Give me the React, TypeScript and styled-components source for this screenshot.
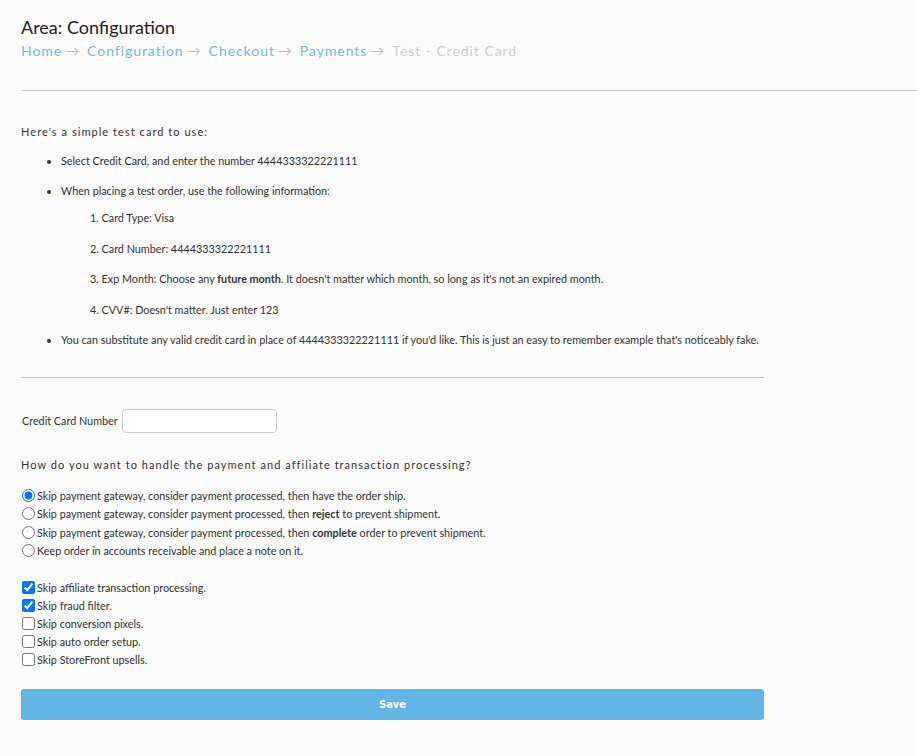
import styled, { createGlobalStyle } from "styled-components";

const GlobalStyle = createGlobalStyle`
    html, body {
        margin: 0;
        padding: 0;
        background: #fbfbfb;
    }

    body {
        font-family: Lato, "Open Sans", Arial, sans-serif;
        color: #333333;
    }
`;

const crumbs = ["Home", "Configuration", "Checkout", "Payments"];

const paymentOptions = [
    { label: <>Skip payment gateway, consider payment processed, then have the order ship.</>, checked: true },
    { label: <>Skip payment gateway, consider payment processed, then <b>reject</b> to prevent shipment.</>, checked: false },
    { label: <>Skip payment gateway, consider payment processed, then <b>complete</b> order to prevent shipment.</>, checked: false },
    { label: <>Keep order in accounts receivable and place a note on it.</>, checked: false },
];

const skipOptions = [
    { label: "Skip affiliate transaction processing.", checked: true },
    { label: "Skip fraud filter.", checked: true },
    { label: "Skip conversion pixels.", checked: false },
    { label: "Skip auto order setup.", checked: false },
    { label: "Skip StoreFront upsells.", checked: false },
];

export default function App() {
    return (
        <Page>
            <GlobalStyle />
            <Title>Area: Configuration</Title>
            <Breadcrumb>
                {crumbs.map((c) => (
                    <span key={c}>
                        <CrumbLink>{c}</CrumbLink>
                        <Arrow>→</Arrow>
                    </span>
                ))}
                <Current>Test - Credit Card</Current>
            </Breadcrumb>

            <TopRule />

            <Content>
                <Lead>Here's a simple test card to use:</Lead>
                <Bullets>
                    <li>Select Credit Card, and enter the number 4444333322221111</li>
                    <li>
                        When placing a test order, use the following information:
                        <Steps>
                            <li>1. Card Type: Visa</li>
                            <li>2. Card Number: 4444333322221111</li>
                            <li>
                                3. Exp Month: Choose any <b>future month</b>. It doesn't matter which month, so long as it's not an expired month.
                            </li>
                            <li>4. CVV#: Doesn't matter. Just enter 123</li>
                        </Steps>
                    </li>
                    <li>
                        You can substitute any valid credit card in place of 4444333322221111 if you'd like. This is just an easy to remember example that's noticeably fake.
                    </li>
                </Bullets>

                <Rule />

                <FieldRow>
                    <FieldLabel htmlFor="cc">Credit Card Number</FieldLabel>
                    <TextInput id="cc" type="text" />
                </FieldRow>

                <Lead $top={24}>How do you want to handle the payment and affiliate transaction processing?</Lead>

                <OptionGroup $top={14}>
                    {paymentOptions.map((o, i) => (
                        <Option key={i} $row={18.3}>
                            <Control type="radio" name="processing" defaultChecked={o.checked} />
                            <span>{o.label}</span>
                        </Option>
                    ))}
                </OptionGroup>

                <OptionGroup $top={19}>
                    {skipOptions.map((o) => (
                        <Option key={o.label} $row={18}>
                            <Control type="checkbox" defaultChecked={o.checked} />
                            <span>{o.label}</span>
                        </Option>
                    ))}
                </OptionGroup>

                <SaveButton type="button">Save</SaveButton>
            </Content>
        </Page>
    );
}

const Page = styled.div`
    padding: 16px 0 40px 21px;
    min-height: 756px;
    box-sizing: border-box;
`;

const Title = styled.h1`
    margin: 0;
    font-size: 18px;
    line-height: 23px;
    font-weight: 400;
    color: #222222;
`;

const Breadcrumb = styled.div`
    margin-top: 3px;
    font-size: 14px;
    line-height: 18px;
    letter-spacing: 0.95px;
`;

const CrumbLink = styled.a`
    color: #74b9e6;
    text-decoration: none;
`;

const Arrow = styled.span`
    color: #bdbdbd;
    margin: 0 7px 0 3px;
`;

const Current = styled.span`
    color: #cfcfcf;
`;

const TopRule = styled.hr`
    margin: 30px 0 0 0;
    border: 0;
    border-top: 1px solid #cccccc;
`;

const Content = styled.div`
    width: 743px;
    font-size: 10.8px;
`;

const Lead = styled.p<{ $top?: number }>`
    margin: ${(p) => p.$top ?? 33}px 0 0 0;
    font-size: 11px;
    line-height: 16px;
    letter-spacing: 1.05px;
    color: #333333;
`;

const Bullets = styled.ul`
    margin: 13px 0 0 0;
    padding-left: 40px;
    line-height: 16px;

    > li {
        margin-bottom: 14px;
    }

    > li:last-child {
        margin-bottom: 0;
    }
`;

const Steps = styled.ol`
    list-style: none;
    margin: 11px 0 0 0;
    padding-left: 29px;

    li {
        margin-bottom: 14.5px;
    }

    li:last-child {
        margin-bottom: 0;
    }
`;

const Rule = styled.hr`
    margin: 29px 0 0 0;
    border: 0;
    border-top: 1px solid #cccccc;
`;

const FieldRow = styled.div`
    display: flex;
    align-items: center;
    margin-top: 31px;
`;

const FieldLabel = styled.label`
    margin-left: 1px;
    margin-right: 4px;
    font-size: 10.8px;
`;

const TextInput = styled.input`
    box-sizing: border-box;
    width: 155px;
    height: 24px;
    border: 1px solid #cccccc;
    border-radius: 4px;
    background: #ffffff;
    padding: 0 6px;
    font-family: inherit;
    outline: none;
`;

const OptionGroup = styled.div<{ $top: number }>`
    display: flex;
    flex-direction: column;
    margin-top: ${(p) => p.$top}px;
`;

const Option = styled.label<{ $row: number }>`
    display: flex;
    align-items: center;
    height: ${(p) => p.$row}px;
    font-size: 10.8px;
    color: #333333;
`;

const Control = styled.input`
    width: 13px;
    height: 13px;
    margin: 0 2px 0 1px;
`;

const SaveButton = styled.button`
    display: block;
    width: 100%;
    height: 31px;
    margin-top: 20px;
    border: 0;
    border-radius: 3px;
    background: #63b5e5;
    color: #ffffff;
    font-family: "DejaVu Sans Condensed", "DejaVu Sans", sans-serif;
    font-weight: 700;
    font-size: 11px;
    cursor: pointer;
`;
